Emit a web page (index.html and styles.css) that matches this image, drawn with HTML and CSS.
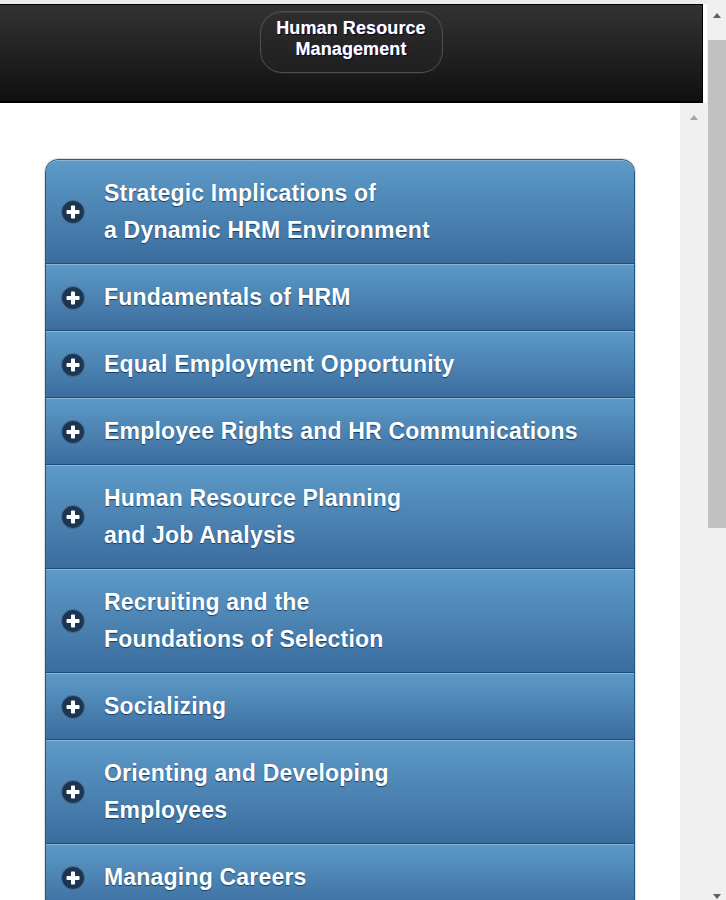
FILE: index.html
```html
<!DOCTYPE html>
<html>
<head>
<meta charset="utf-8">
<title>Human Resource Management</title>
<link rel="stylesheet" href="styles.css">
</head>
<body>
<div class="window">
  <div class="main">
    <div class="topstrip"></div>
    <header class="header">
      <div class="title-btn">Human Resource<br>Management</div>
    </header>
    <div class="body-row">
      <div class="content">
        <ul class="menu">
          <li class="item first"><span class="icon"><svg width="24" height="24" viewBox="0 0 24 24"><circle cx="12" cy="12" r="11.5" fill="#1c3551" stroke="#4a6f93" stroke-width="1"/><rect x="5.5" y="10" width="13" height="4" rx="0.8" fill="#fff"/><rect x="10" y="5.5" width="4" height="13" rx="0.8" fill="#fff"/></svg></span><span class="label">Strategic Implications of<br>a Dynamic HRM Environment</span></li>
          <li class="item"><span class="icon"><svg width="24" height="24" viewBox="0 0 24 24"><circle cx="12" cy="12" r="11.5" fill="#1c3551" stroke="#4a6f93" stroke-width="1"/><rect x="5.5" y="10" width="13" height="4" rx="0.8" fill="#fff"/><rect x="10" y="5.5" width="4" height="13" rx="0.8" fill="#fff"/></svg></span><span class="label">Fundamentals of HRM</span></li>
          <li class="item"><span class="icon"><svg width="24" height="24" viewBox="0 0 24 24"><circle cx="12" cy="12" r="11.5" fill="#1c3551" stroke="#4a6f93" stroke-width="1"/><rect x="5.5" y="10" width="13" height="4" rx="0.8" fill="#fff"/><rect x="10" y="5.5" width="4" height="13" rx="0.8" fill="#fff"/></svg></span><span class="label">Equal Employment Opportunity</span></li>
          <li class="item"><span class="icon"><svg width="24" height="24" viewBox="0 0 24 24"><circle cx="12" cy="12" r="11.5" fill="#1c3551" stroke="#4a6f93" stroke-width="1"/><rect x="5.5" y="10" width="13" height="4" rx="0.8" fill="#fff"/><rect x="10" y="5.5" width="4" height="13" rx="0.8" fill="#fff"/></svg></span><span class="label">Employee Rights and HR Communications</span></li>
          <li class="item"><span class="icon"><svg width="24" height="24" viewBox="0 0 24 24"><circle cx="12" cy="12" r="11.5" fill="#1c3551" stroke="#4a6f93" stroke-width="1"/><rect x="5.5" y="10" width="13" height="4" rx="0.8" fill="#fff"/><rect x="10" y="5.5" width="4" height="13" rx="0.8" fill="#fff"/></svg></span><span class="label">Human Resource Planning<br>and Job Analysis</span></li>
          <li class="item"><span class="icon"><svg width="24" height="24" viewBox="0 0 24 24"><circle cx="12" cy="12" r="11.5" fill="#1c3551" stroke="#4a6f93" stroke-width="1"/><rect x="5.5" y="10" width="13" height="4" rx="0.8" fill="#fff"/><rect x="10" y="5.5" width="4" height="13" rx="0.8" fill="#fff"/></svg></span><span class="label">Recruiting and the<br>Foundations of Selection</span></li>
          <li class="item"><span class="icon"><svg width="24" height="24" viewBox="0 0 24 24"><circle cx="12" cy="12" r="11.5" fill="#1c3551" stroke="#4a6f93" stroke-width="1"/><rect x="5.5" y="10" width="13" height="4" rx="0.8" fill="#fff"/><rect x="10" y="5.5" width="4" height="13" rx="0.8" fill="#fff"/></svg></span><span class="label">Socializing</span></li>
          <li class="item"><span class="icon"><svg width="24" height="24" viewBox="0 0 24 24"><circle cx="12" cy="12" r="11.5" fill="#1c3551" stroke="#4a6f93" stroke-width="1"/><rect x="5.5" y="10" width="13" height="4" rx="0.8" fill="#fff"/><rect x="10" y="5.5" width="4" height="13" rx="0.8" fill="#fff"/></svg></span><span class="label">Orienting and Developing<br>Employees</span></li>
          <li class="item"><span class="icon"><svg width="24" height="24" viewBox="0 0 24 24"><circle cx="12" cy="12" r="11.5" fill="#1c3551" stroke="#4a6f93" stroke-width="1"/><rect x="5.5" y="10" width="13" height="4" rx="0.8" fill="#fff"/><rect x="10" y="5.5" width="4" height="13" rx="0.8" fill="#fff"/></svg></span><span class="label">Managing Careers</span></li>
        </ul>
      </div>
      <div class="inner-scroll">
        <div class="arrow-box"><span class="tri-up light"></span></div>
      </div>
    </div>
  </div>
  <div class="outer-scroll">
    <div class="arrow-box top"><span class="tri-up"></span></div>
    <div class="thumb"></div>
    <div class="spacer"></div>
    <div class="arrow-box bottom"><span class="tri-down"></span></div>
  </div>
</div>
</body>
</html>
```

FILE: styles.css
```css
* { box-sizing: border-box; }
html, body {
  margin: 0;
  padding: 0;
  width: 726px;
  height: 900px;
  overflow: hidden;
  background: #ffffff;
  font-family: "Liberation Sans", Arial, Helvetica, sans-serif;
}
.window {
  display: flex;
  width: 726px;
  height: 900px;
}
.main {
  width: 707px;
  height: 900px;
  display: flex;
  flex-direction: column;
}
.topstrip {
  height: 4px;
  background: #ececec;
}
.header {
  height: 99px;
  margin-right: 4px;
  background: linear-gradient(#333333, #101010);
  border-top: 1px solid #000;
  border-right: 1px solid #000;
  border-bottom: 2px solid #000;
  display: flex;
  justify-content: center;
  align-items: flex-start;
  padding-top: 6px;
}
.title-btn {
  width: 183px;
  height: 62px;
  border-radius: 22px;
  border: 1px solid #505050;
  background: linear-gradient(#2e2e2e, #1f1f1f);
  box-shadow: inset 0 1px 0 rgba(255,255,255,0.08), 0 1px 1px rgba(255,255,255,0.05);
  color: #fff;
  font-weight: bold;
  font-size: 18px;
  letter-spacing: 0.1px;
  line-height: 21px;
  text-align: center;
  padding-top: 6px;
  text-shadow: 0 0 1px #6a6ad8, 1px 1px 1px #000;
}
.body-row {
  flex: 1;
  display: flex;
  min-height: 0;
}
.content {
  width: 680px;
  padding: 56px 45px 0 45px;
  overflow: hidden;
}
.inner-scroll {
  width: 27px;
  background: #f0f0f0;
}
.arrow-box {
  height: 28px;
  display: flex;
  align-items: center;
  justify-content: center;
}
.tri-up {
  width: 0;
  height: 0;
  border-left: 4.5px solid transparent;
  border-right: 4.5px solid transparent;
  border-bottom: 5px solid #606060;
}
.tri-up.light { border-bottom-color: #a6a6a6; }
.tri-down {
  width: 0;
  height: 0;
  border-left: 4.5px solid transparent;
  border-right: 4.5px solid transparent;
  border-top: 5px solid #606060;
}
.outer-scroll {
  width: 19px;
  background: #f0f0f0;
  display: flex;
  flex-direction: column;
}
.outer-scroll .arrow-box.top { height: 30px; }
.outer-scroll .arrow-box.bottom { height: 10px; align-items: flex-end; padding-bottom: 1px; }
.thumb {
  margin-top: 10px;
  margin-left: 1px;
  height: 488px;
  background: #c1c1c1;
}
.spacer { flex: 1; }

.menu {
  list-style: none;
  margin: 0;
  padding: 0;
  width: 590px;
  border-radius: 13px 13px 0 0;
  box-shadow: 0 0 2px rgba(0,0,0,0.45);
  overflow: hidden;
}
.item {
  display: flex;
  align-items: center;
  gap: 19px;
  padding: 15px 10px 14px 15px;
  background: linear-gradient(#5d9ac8, #3b6d9e);
  border-left: 1px solid #24568a;
  border-right: 1px solid #24568a;
  border-top: 1px solid #1d4c7a;
  box-shadow: inset 0 1px 0 rgba(255,255,255,0.28);
  color: #fff;
  font-weight: bold;
  font-size: 23px;
  letter-spacing: 0.2px;
  line-height: 37px;
  text-shadow: 0 1px 1px #173d63;
}
.item.first {
  border-top: 1px solid #2a5d8e;
  border-radius: 13px 13px 0 0;
}
.icon {
  width: 24px;
  height: 24px;
  flex: none;
  display: block;
}
.icon svg { display: block; }
.label { display: block; }
```
